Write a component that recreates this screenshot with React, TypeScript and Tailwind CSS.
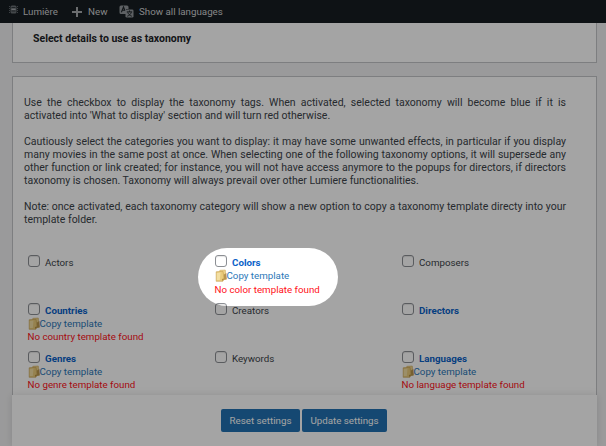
import React from "react";

type Item = { name: string; active?: boolean; missing?: string };

const items: Item[] = [
  { name: "Actors" },
  { name: "Colors", active: true, missing: "No color template found" },
  { name: "Composers" },
  { name: "Countries", active: true, missing: "No country template found" },
  { name: "Creators" },
  { name: "Directors", active: true },
  { name: "Genres", active: true, missing: "No genre template found" },
  { name: "Keywords" },
  { name: "Languages", active: true, missing: "No language template found" },
];

function FilmIcon() {
  return (
    <svg width="9" height="9" viewBox="0 0 9 9" className="mb-1 shrink-0">
      <path d="M.5 1v7M8.500 1v7" stroke="#5d6368" strokeWidth="1" strokeDasharray="1 1" fill="none" />
      <rect x="1.500" y="0.500" width="6" height="8" rx="1.500" fill="#6a7075" />
      <rect x="2.500" y="2" width="4" height="1.500" fill="#30363b" />
      <rect x="2.500" y="3.500" width="4" height="1.500" fill="#a5a9ad" />
      <rect x="2.500" y="5.500" width="4" height="1" fill="#30363b" />
    </svg>
  );
}

function TranslateIcon() {
  return (
    <svg width="15" height="13" viewBox="0 0 15 13" className="shrink-0">
      <path d="M2 .5h6a1.5 1.5 0 0 1 1.5 1.5v2H7v5H2A1.500 1.500 0 0 1 .5 7.500V2A1.500 1.500 0 0 1 2 .5Z" fill="#92979c" />
      <path d="M2.400 7.200 4.500 2l1.500 3.700M3.200 5.300h2.600" stroke="#1d2327" strokeWidth="1.100" fill="none" />
      <rect x="6.500" y="4.500" width="8" height="8" rx="1.300" fill="#92979c" />
      <path d="M7.800 6.900h5.400M10.500 5.500v1.400M12.300 7.200c-.6 2-2 3.300-4 4M8.800 7.400c.6 1.800 2 3.100 4 3.800" stroke="#1d2327" strokeWidth="1" fill="none" />
    </svg>
  );
}

function CopyIcon() {
  return (
    <svg width="12" height="13" viewBox="0 0 12 13" className="shrink-0">
      <path d="M4.800 1.300 10.300 1l1 9.300-6 .7Z" fill="#efd38a" stroke="#d2b065" strokeWidth=".6" />
      <path d="M9 5.500 11.300 4l.3 6.200-3.800.9Z" fill="#b8954d" />
      <path d="M1.200 2.800 8 2.300l1 7.200-1.200 2.800H1.200Z" fill="#e9cb7c" stroke="#c6a051" strokeWidth=".6" />
      <path d="M1.800 4 5.500 3.600 4.800 11H1.800Z" fill="#f3dfa3" />
      <path d="M7.800 12.300 9 9.500l-2.200.4Z" fill="#b08a3e" />
    </svg>
  );
}

function Cell({ item }: { item: Item }) {
  return (
    <div className="h-12">
      <div className="flex h-[15px] items-end">
        <span className="mb-[2px] mr-[5px] h-3 w-3 shrink-0 rounded-[3px] border border-[#8c8f94] bg-white shadow-[inset_0_1px_1px_rgba(0,0,0,0.1)]" />
        <span className={item.active ? "font-bold text-[#0a62c8]" : ""}>{item.name}</span>
      </div>
      {item.missing && (
        <>
          <div className="flex h-[13px] items-center text-[#2b78b8]">
            <CopyIcon />
            <span className="-ml-[0.5px]">Copy template</span>
          </div>
          <div className={item.name === "Colors" ? "-ml-[0.5px] mt-px text-[#ff1018]" : "-ml-[0.5px] text-[#ff1018]"}>{item.missing}</div>
        </>
      )}
    </div>
  );
}

export default function App() {
  return (
    <div className="relative flex h-[446px] w-[606px] flex-col overflow-hidden bg-[#f0f0f1] font-['Roboto',sans-serif] text-[10.5px] leading-[13px] text-[#3c434a]">
      <header className="flex h-[23px] shrink-0 items-center bg-[#161c21] pl-[9px] text-[9.75px] text-[#d0d1d3]">
        <FilmIcon />
        <span className="ml-[5px] w-[49px]">Lumière</span>
        <svg width="10" height="10" viewBox="0 0 10 10" className="shrink-0">
          <path d="M5 0v10M0 5h10" stroke="#a7aaad" strokeWidth="2" />
        </svg>
        <span className="ml-[6px] w-[31px]">New</span>
        <TranslateIcon />
        <span className="ml-[5px]">Show all languages</span>
      </header>

      <section className="ml-3 mr-[9px] h-10 shrink-0 border border-t-0 border-[#c3c4c7] bg-white pl-5 pt-[9px] font-bold text-[#1d2327]">
        Select details to use as taxonomy
      </section>

      <main className="ml-3 mr-[9px] mt-[13px] h-[319px] shrink-0 overflow-hidden border border-b-0 border-[#c3c4c7] bg-white pl-[11px] pr-[30px] pt-[19px]">
        <div className="space-y-[13px] text-justify">
          <p>
            Use the checkbox to display the taxonomy tags. When activated, selected taxonomy will become blue if it is
            activated into 'What to display' section and will turn red otherwise.
          </p>
          <p>
            Cautiously select the categories you want to display: it may have some unwanted effects, in particular if you
            display many movies in the same post at once. When selecting one of the following taxonomy options, it will
            supersede any other function or link created; for instance, you will not have access anymore to the popups for
            directors, if directors taxonomy is chosen. Taxonomy will always prevail over other Lumiere functionalities.
          </p>
          <p>
            Note: once activated, each taxonomy category will show a new option to copy a taxonomy template directy into
            your template folder.
          </p>
        </div>
        <div className="ml-1 mt-7 grid grid-cols-[187px_187px_160px] whitespace-nowrap text-[9.75px]">
          {items.map((item) => (
            <Cell key={item.name} item={item} />
          ))}
        </div>
      </main>

      <footer className="ml-3 mr-[9px] flex h-[51px] shrink-0 items-start justify-center gap-[2px] bg-white pt-[14px] text-[9.75px] text-white shadow-[0_0_8px_rgba(0,0,0,0.12)]">
        <button className="-ml-px h-[23px] w-[79px] rounded-[2px] bg-[#2271b1]">Reset settings</button>
        <button className="h-[23px] w-[85px] rounded-[2px] bg-[#2271b1]">Update settings</button>
      </footer>

      {/* Dimmed page with a spotlight on the Colors entry */}
      <div className="pointer-events-none absolute left-[198px] top-[248px] h-[58px] w-[140px] rounded-[29px] shadow-[0_0_0_700px_rgba(0,0,0,0.355)]" />
    </div>
  );
}
